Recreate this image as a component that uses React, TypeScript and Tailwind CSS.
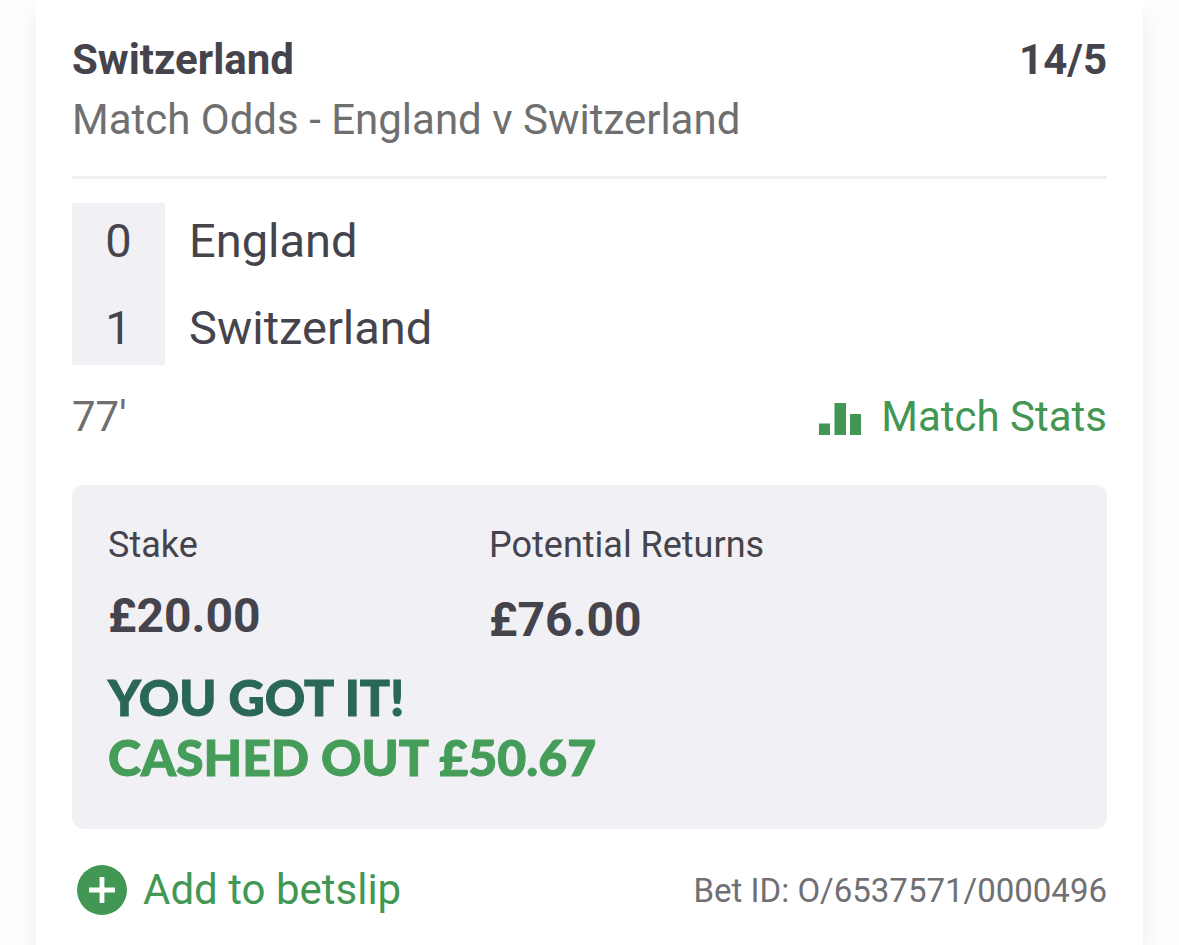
import { useId } from "react";

const teams = [
  { name: "England", score: 0 },
  { name: "Switzerland", score: 1 },
];

function StatsIcon() {
  return (
    <svg width="44" height="38" viewBox="0 0 44 38" fill="currentColor" aria-hidden="true">
      <path d="M2 25.500h11v11.500H2zM17.500 5h11.500v32H17.500zM33 16h11v21H33z" />
    </svg>
  );
}

function PlusIcon() {
  return (
    <svg width="50" height="50" viewBox="0 0 50 50" aria-hidden="true">
      <circle cx="25" cy="25" r="25" fill="#419753" />
      <path d="M25 12v26M12 25h26" stroke="#fff" strokeWidth="4.800" />
    </svg>
  );
}

function Scoreboard() {
  return (
    <table className="mt-6 border-collapse text-[47px] leading-[75px]">
      <tbody>
        {teams.map((team) => (
          <tr key={team.name} className="h-[81px] align-top last:align-bottom">
            <td className="w-[93px] bg-[#f1f0f5] p-0 text-center">{team.score}</td>
            <th scope="row" className="p-0 pl-6 text-left font-normal">
              {team.name}
            </th>
          </tr>
        ))}
      </tbody>
    </table>
  );
}

export default function App() {
  const titleId = useId();

  return (
    <div className="min-h-screen bg-[#fefefe] px-9 font-['Roboto',sans-serif] text-[#45444c]">
      <article
        aria-labelledby={titleId}
        className="min-h-screen bg-white px-9 pt-9 pb-7 shadow-[0_12px_24px_rgba(0,0,0,0.08)]"
      >
        <header className="border-b-3 border-[#f0f0f2] pb-8">
          <div className="flex justify-between text-[42px] leading-[48px] font-bold">
            <h2 id={titleId}>Switzerland</h2>
            <span>14/5</span>
          </div>
          <p className="mt-3 text-[42px] leading-[48px] text-[#6f6f70]">
            Match Odds - England v Switzerland
          </p>
        </header>

        <Scoreboard />

        <div className="mt-7 flex items-center justify-between text-[42px] leading-[48px]">
          <span className="text-[#6f6f70]">77&apos;</span>
          <a href="#stats" className="flex items-center gap-5 text-[#419753]">
            <StatsIcon />
            Match Stats
          </a>
        </div>

        <section className="mt-11 rounded-xl bg-[#f1f0f5] px-9 pt-9 pb-[42px]">
          <dl className="flex">
            <div className="w-[381px]">
              <dt className="text-[36px] leading-[48px]">Stake</dt>
              <dd className="mt-5 text-[48px] leading-[54px] font-bold">£20.00</dd>
            </div>
            <div>
              <dt className="text-[36px] leading-[48px]">Potential Returns</dt>
              <dd className="mt-6 text-[48px] leading-[54px] font-bold">£76.00</dd>
            </div>
          </dl>
          <p className="mt-5 font-['Lato',sans-serif] text-[50px] leading-[60px] font-black uppercase [-webkit-text-stroke:1px]">
            <span className="block text-[#2a6757]">You got it!</span>
            <span className="block text-[#459d59]">Cashed out £50.67</span>
          </p>
        </section>

        <footer className="mt-9 flex items-end justify-between">
          <button type="button" className="flex items-center gap-4 pl-[5px] text-[42px] leading-[48px] text-[#419753]">
            <PlusIcon />
            Add to betslip
          </button>
          <span className="text-[33px] leading-[48px] text-[#6f6f74]">Bet ID: O/6537571/0000496</span>
        </footer>
      </article>
    </div>
  );
}
